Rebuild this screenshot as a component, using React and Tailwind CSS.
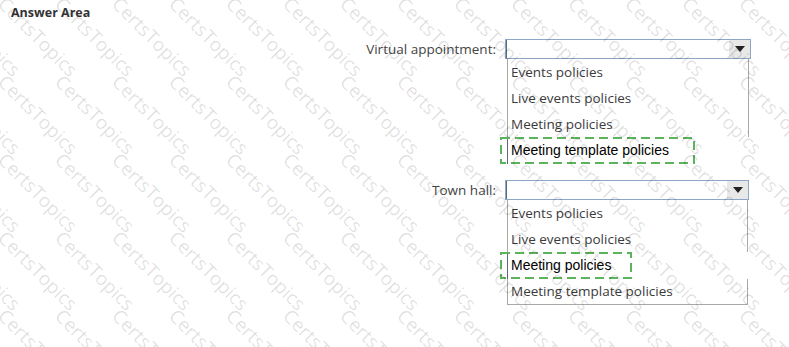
import React from "react";

const ui = { fontFamily: '"Open Sans", "Noto Sans", sans-serif' };
const arial = { fontFamily: '"Liberation Sans", Arial, sans-serif' };

const marks = [];
for (let r = -1; r < 6; r++) {
  for (let c = -2; c < 15; c++) {
    marks.push({ key: `${r}-${c}`, left: 8 + c * 57, top: -6 + r * 78 });
  }
}

function Watermark() {
  return (
    <div className="pointer-events-none absolute inset-0 overflow-hidden">
      {marks.map((m) => (
        <span
          key={m.key}
          className="absolute origin-top-left rotate-45 whitespace-nowrap text-[19px] leading-none text-black/[0.13]"
          style={{ left: m.left, top: m.top, ...ui }}
        >
          CertsTopics
        </span>
      ))}
    </div>
  );
}

function DashBox({ width }) {
  return (
    <svg
      className="absolute left-[-7px] top-0"
      width={width}
      height="27"
      viewBox={`0 0 ${width} 27`}
    >
      <rect
        x="1"
        y="1"
        width={width - 2}
        height="25"
        fill="none"
        stroke="#5bb35b"
        strokeWidth="2"
        strokeDasharray="9 5"
      />
    </svg>
  );
}

function Select({ width }) {
  return (
    <div
      className="flex h-[20px] items-stretch border border-[#8ea6c6] bg-white"
      style={{ width }}
    >
      <div className="flex-1 border-l border-[#5a6b80]" />
      <div className="flex w-[21px] items-center justify-center bg-[#e8e8e8]">
        <svg width="10" height="6" viewBox="0 0 10 6">
          <path d="M0 0 L10 0 L5 6 Z" fill="#222" />
        </svg>
      </div>
    </div>
  );
}

function Option({ children, last }) {
  return (
    <div
      className={
        "flex h-[26px] items-center border-x border-[#a9a9a9] pl-[3px] text-[13.5px] text-[#3b3b3b]" +
        (last ? " border-b" : "")
      }
      style={ui}
    >
      {children}
    </div>
  );
}

function Answer({ children, box }) {
  return (
    <div className="relative h-[27px]">
      <DashBox width={box} />
      <div
        className="flex h-full items-center border-l border-[#5d6a7a] pl-[3px] text-[14px] text-black"
        style={arial}
      >
        {children}
      </div>
    </div>
  );
}

export default function App() {
  return (
    <div className="relative h-[347px] w-[789px] overflow-hidden bg-white">
      <div
        className="pl-[11px] pt-[5px] text-[12.5px] font-bold leading-4 text-[#333]"
        style={ui}
      >
        Answer Area
      </div>

      <div className="mt-[18px] grid grid-cols-[496px_246px] items-start gap-x-[9px] gap-y-[16px]">
        <div
          className="flex h-[20px] items-center justify-end text-[13.5px] text-[#444]"
          style={ui}
        >
          Virtual appointment:
        </div>
        <div>
          <Select width={246} />
          <div className="mx-[2px]">
            <Option>Events policies</Option>
            <Option>Live events policies</Option>
            <Option>Meeting policies</Option>
            <Answer box={195}>Meeting template policies</Answer>
          </div>
        </div>

        <div
          className="flex h-[20px] items-center justify-end text-[13.5px] text-[#444]"
          style={ui}
        >
          Town hall:
        </div>
        <div>
          <Select width={244} />
          <div className="mr-[3px] ml-[2px]">
            <Option>Events policies</Option>
            <Option>Live events policies</Option>
            <Answer box={132}>Meeting policies</Answer>
            <Option last>Meeting template policies</Option>
          </div>
        </div>
      </div>

      <Watermark />
    </div>
  );
}
